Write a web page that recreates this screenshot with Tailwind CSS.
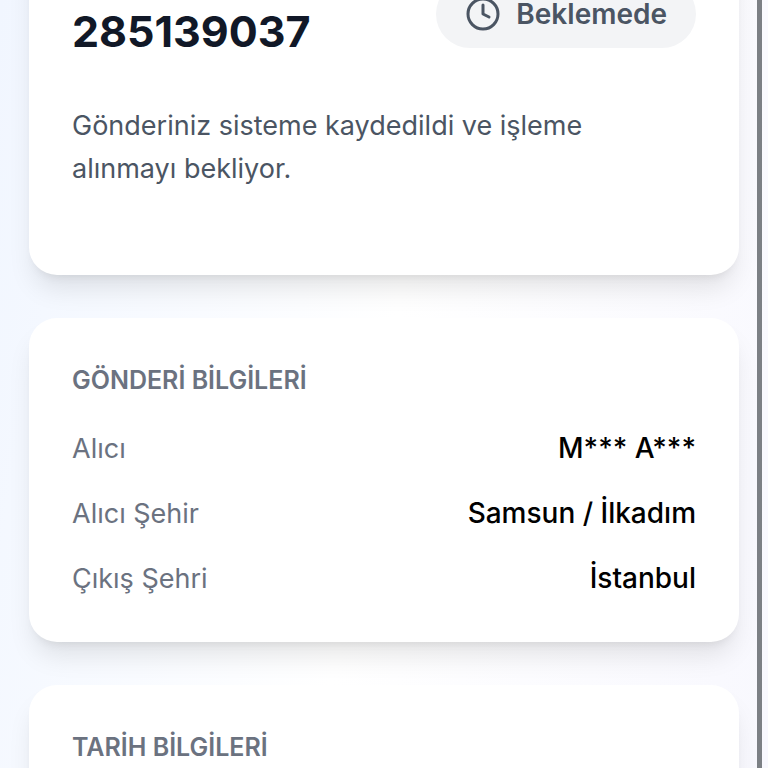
<!DOCTYPE html>
<html lang="tr">
<head>
  <meta charset="UTF-8">
  <meta name="viewport" content="width=device-width, initial-scale=1.0">
  <title>Gönderi Takip</title>
  <script src="https://cdn.jsdelivr.net/npm/@tailwindcss/browser@4"></script>
</head>
<body class="h-screen overflow-hidden bg-linear-100 from-[#f1f6ff] via-white to-[#f8f8fe] font-['Inter',sans-serif] text-[27px] leading-[43px] text-black">

  <!-- Page is shown scrolled down past the top of the status card -->
  <main class="-mt-[63px] flex flex-col gap-[43px] px-[29px]">

    <!-- Status -->
    <section class="rounded-[28px] bg-white px-[43px] pt-[43px] pb-[85px] shadow-[0_18px_27px_-5px_rgb(0_0_0/0.1),0_7px_11px_-7px_rgb(0_0_0/0.1)]">
      <div class="mb-11 flex items-start justify-between">
        <h1 class="pt-[22px] text-[43px] leading-[58px] font-bold text-[#111827]">285139037</h1>
        <div class="flex items-center gap-[15px] rounded-full bg-[#f3f4f6] px-[29px] py-4 text-[28px] leading-9 font-semibold text-[#4b5563]">
          <svg class="size-9" viewBox="0 0 24 24" fill="none" stroke="currentColor" stroke-width="2" stroke-linecap="round" stroke-linejoin="round" aria-hidden="true">
            <circle cx="12" cy="12" r="10"></circle>
            <polyline points="12 6 12 12 16 14"></polyline>
          </svg>
          <span>Beklemede</span>
        </div>
      </div>
      <p class="pr-[43px] text-[#4b5563]">Gönderiniz sisteme kaydedildi ve işleme alınmayı bekliyor.</p>
    </section>

    <!-- Shipment info -->
    <section class="rounded-[28px] bg-white px-[43px] pt-11 pb-[42px] shadow-[0_18px_27px_-5px_rgb(0_0_0/0.1),0_7px_11px_-7px_rgb(0_0_0/0.1)]">
      <h2 class="mb-[29px] text-[25px] leading-9 font-semibold text-[#6b7280]">GÖNDERİ BİLGİLERİ</h2>
      <dl class="flex flex-col gap-[22px]">
        <div class="flex justify-between">
          <dt class="text-[#6b7280]">Alıcı</dt>
          <dd class="text-[28px] font-medium">M*** A***</dd>
        </div>
        <div class="flex justify-between">
          <dt class="text-[#6b7280]">Alıcı Şehir</dt>
          <dd class="text-[28px] font-medium">Samsun / İlkadım</dd>
        </div>
        <div class="flex justify-between">
          <dt class="text-[#6b7280]">Çıkış Şehri</dt>
          <dd class="text-[28px] font-medium">İstanbul</dd>
        </div>
      </dl>
    </section>

    <!-- Date info -->
    <section class="rounded-[28px] bg-white px-[43px] pt-11 pb-[42px] shadow-[0_18px_27px_-5px_rgb(0_0_0/0.1),0_7px_11px_-7px_rgb(0_0_0/0.1)]">
      <h2 class="text-[25px] leading-9 font-semibold text-[#6b7280]">TARİH BİLGİLERİ</h2>
    </section>
  </main>

  <!-- Scroll indicator -->
  <div class="fixed inset-y-0 right-[6px] w-[5px] bg-[#7c8085]"></div>
</body>
</html>
